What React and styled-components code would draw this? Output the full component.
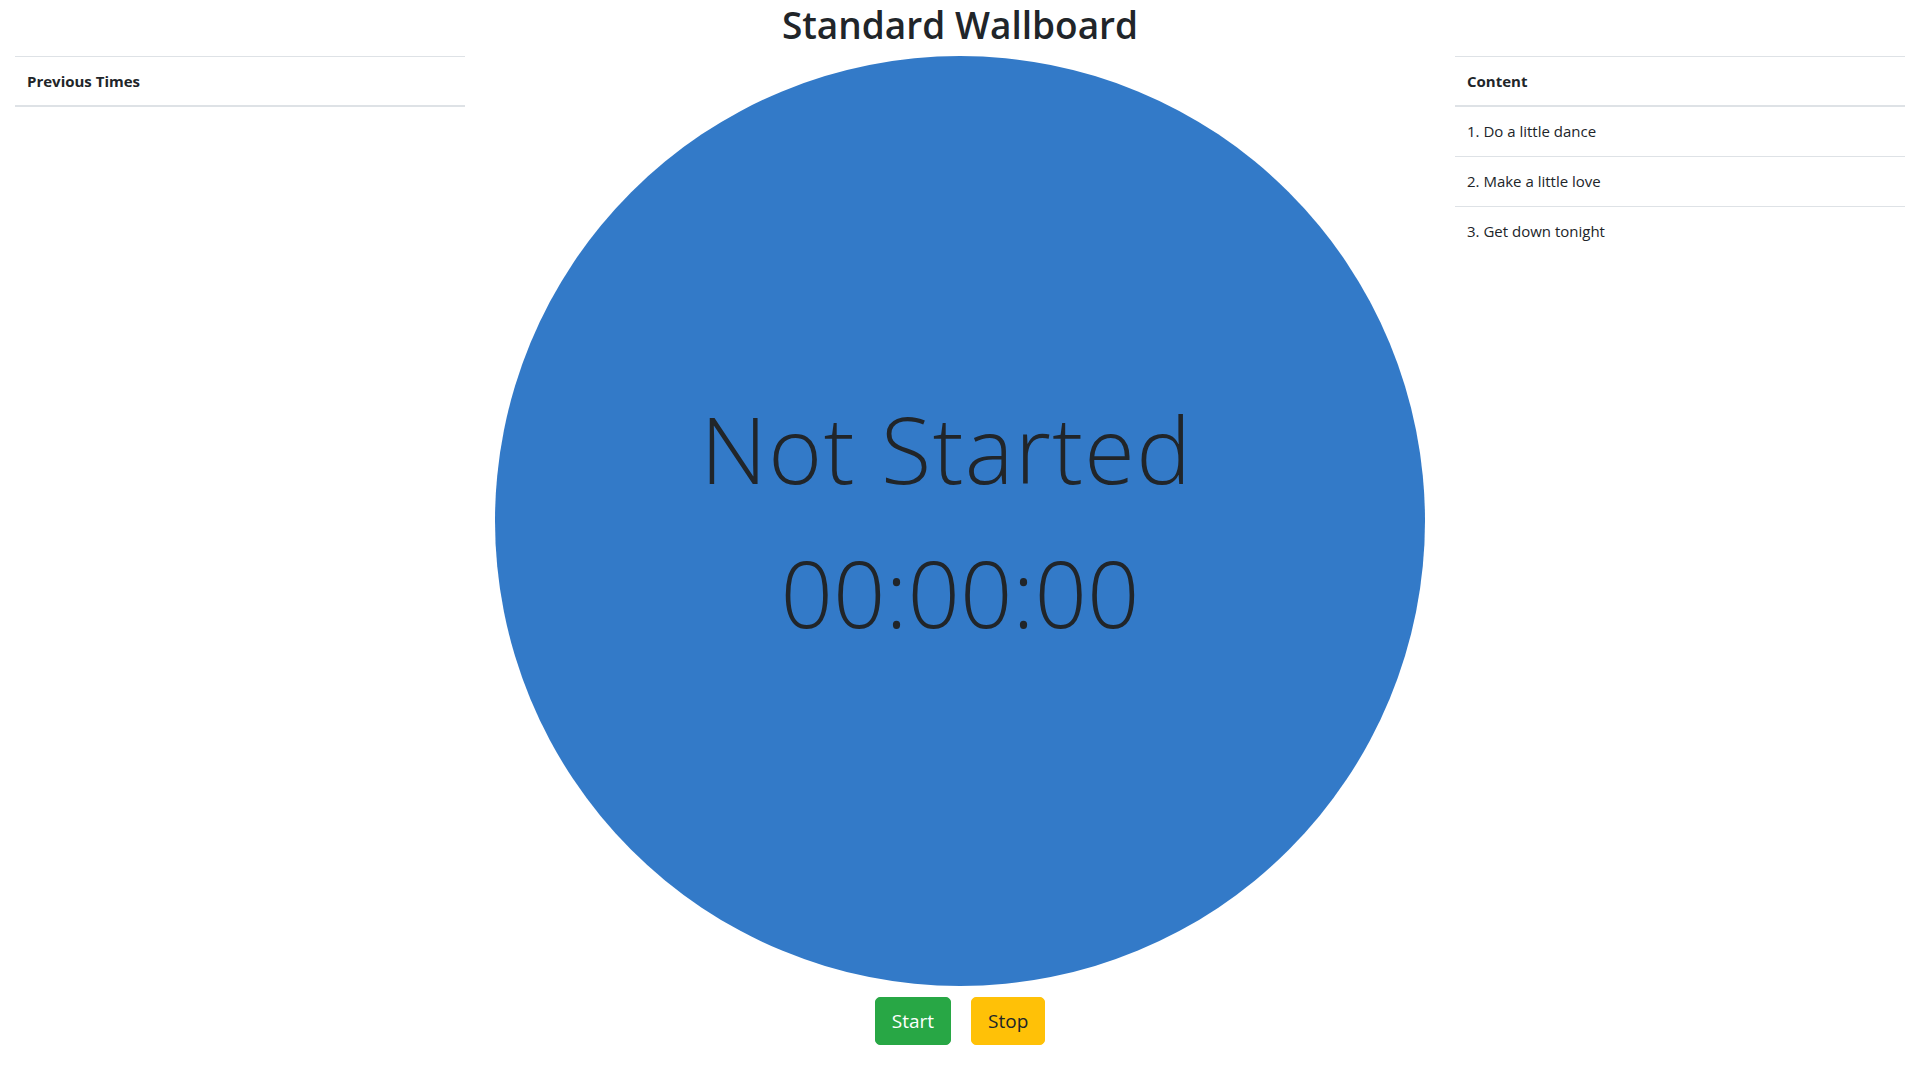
import React from 'react'
import styled, { createGlobalStyle } from 'styled-components'

const GlobalStyle = createGlobalStyle`
body{
    margin:0;
    font-family:"Open Sans","Noto Sans",sans-serif;
    font-size:16px;
    line-height:1.5;
    color:#212529;
    background:#fff;
}
*{
    box-sizing:border-box;
}
`

const previousTimes = []

const content = [
    '1. Do a little dance',
    '2. Make a little love',
    '3. Get down tonight',
]

function App() {
    return (
        <Page>
            <GlobalStyle />
            <Title>Standard Wallboard</Title>
            <Row>
                <Col>
                    <Table>
                        <thead>
                            <tr><Th>Previous Times</Th></tr>
                        </thead>
                        <tbody>
                            {previousTimes.map(t => (
                                <tr key={t}><Td>{t}</Td></tr>
                            ))}
                        </tbody>
                    </Table>
                </Col>
                <Col>
                    <Circle>
                        <BigText status>Not Started</BigText>
                        <BigText>00:00:00</BigText>
                    </Circle>
                    <Buttons>
                        <Button variant="start">Start</Button>
                        <Button variant="stop">Stop</Button>
                    </Buttons>
                </Col>
                <Col>
                    <Table>
                        <thead>
                            <tr><Th>Content</Th></tr>
                        </thead>
                        <tbody>
                            {content.map(c => (
                                <tr key={c}><Td>{c}</Td></tr>
                            ))}
                        </tbody>
                    </Table>
                </Col>
            </Row>
        </Page>
    )
}

export default App

const Page = styled.div`
padding:0 15px;
`

const Title = styled.h1`
margin:0 0 8px;
padding-top:1px;
font-size:37px;
font-weight:600;
line-height:47px;
text-align:center;
`

const Row = styled.div`
display:grid;
grid-template-columns:1fr 2fr 1fr;
margin:0 -15px;
`

const Col = styled.div`
padding:0 15px;
`

const Table = styled.table`
width:100%;
border-collapse:collapse;
`

const Th = styled.th`
text-align:left;
padding:12px;
font-size:15px;
line-height:24px;
font-weight:700;
border-top:1px solid #dee2e6;
border-bottom:2px solid #dee2e6;
`

const Td = styled.td`
padding:12px;
font-size:15px;
line-height:25px;
border-top:1px solid #dee2e6;
tr:first-child &{
    border-top:none;
}
`

const Circle = styled.div`
width:100%;
aspect-ratio:1;
border-radius:50%;
background:#337ac8;
display:flex;
flex-direction:column;
align-items:center;
justify-content:center;
`

const BigText = styled.div`
font-size:92px;
font-weight:300;
line-height:144px;
letter-spacing:${p => p.status ? '1.4px' : '0'};
padding-right:${p => p.status ? '27px' : '0'};
`

const Buttons = styled.div`
display:flex;
justify-content:center;
gap:20px;
margin-top:11px;
`

const Button = styled.button`
font-family:inherit;
font-size:19px;
line-height:30px;
padding:8px 16px;
border-radius:5px;
border:1px solid ${p => p.variant === 'start' ? '#28a745' : '#ffc107'};
background:${p => p.variant === 'start' ? '#28a745' : '#ffc107'};
color:${p => p.variant === 'start' ? '#fff' : '#212529'};
cursor:pointer;
`
